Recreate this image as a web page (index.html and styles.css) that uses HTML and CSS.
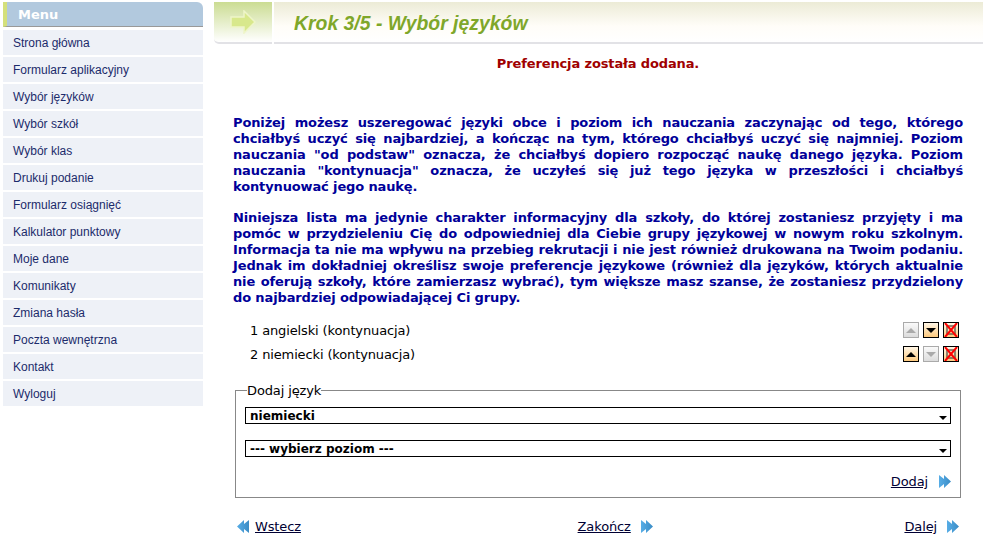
FILE: index.html
```html
<!DOCTYPE html>
<html lang="pl">
<head>
    <meta charset="UTF-8">
    <meta name="viewport" content="width=device-width, initial-scale=1.0">
    <title>Krok 3/5 - Wybór języków</title>
    <link rel="stylesheet" href="styles.css">
</head>
<body>
    <svg class="defs" width="0" height="0">
        <defs>
            <linearGradient id="arrowFill" x1="0" y1="0" x2="1" y2="0">
                <stop offset="0" stop-color="#57ade6"/>
                <stop offset="1" stop-color="#3a8cc6"/>
            </linearGradient>
        </defs>
    </svg>

    <div class="sidebar">
        <div class="menu-title">Menu</div>
        <ul class="menu">
            <li><a href="#">Strona główna</a></li>
            <li><a href="#">Formularz aplikacyjny</a></li>
            <li><a href="#">Wybór języków</a></li>
            <li><a href="#">Wybór szkół</a></li>
            <li><a href="#">Wybór klas</a></li>
            <li><a href="#">Drukuj podanie</a></li>
            <li><a href="#">Formularz osiągnięć</a></li>
            <li><a href="#">Kalkulator punktowy</a></li>
            <li><a href="#">Moje dane</a></li>
            <li><a href="#">Komunikaty</a></li>
            <li><a href="#">Zmiana hasła</a></li>
            <li><a href="#">Poczta wewnętrzna</a></li>
            <li><a href="#">Kontakt</a></li>
            <li><a href="#">Wyloguj</a></li>
        </ul>
    </div>

    <div class="main">
        <div class="page-header">
            <div class="header-icon">
                <svg width="26" height="24" viewBox="0 0 26 24">
                    <path d="M1 7H14V1L25 12L14 23V17H1Z" fill="#d8e88c" stroke="#eef5c8" stroke-width="1.5"/>
                </svg>
            </div>
            <h1 class="header-title">Krok 3/5 - Wybór języków</h1>
        </div>

        <div class="content">
            <p class="notice">Preferencja została dodana.</p>

            <p class="info">
                <span class="line">Poniżej możesz uszeregować języki obce i poziom ich nauczania zaczynając od tego, którego</span>
                <span class="line">chciałbyś uczyć się najbardziej, a kończąc na tym, którego chciałbyś uczyć się najmniej. Poziom</span>
                <span class="line">nauczania "od podstaw" oznacza, że chciałbyś dopiero rozpocząć naukę danego języka. Poziom</span>
                <span class="line">nauczania "kontynuacja" oznacza, że uczyłeś się już tego języka w przeszłości i chciałbyś</span>
                kontynuować jego naukę.
            </p>

            <p class="info">
                <span class="line">Niniejsza lista ma jedynie charakter informacyjny dla szkoły, do której zostaniesz przyjęty i ma</span>
                <span class="line">pomóc w przydzieleniu Cię do odpowiedniej dla Ciebie grupy językowej w nowym roku szkolnym.</span>
                <span class="line">Informacja ta nie ma wpływu na przebieg rekrutacji i nie jest również drukowana na Twoim podaniu.</span>
                <span class="line">Jednak im dokładniej określisz swoje preferencje językowe (również dla języków, których aktualnie</span>
                <span class="line">nie oferują szkoły, które zamierzasz wybrać), tym większe masz szanse, że zostaniesz przydzielony</span>
                do najbardziej odpowiadającej Ci grupy.
            </p>

            <div class="pref-list">
                <div class="pref-row">
                    <span class="pref-name">1 angielski (kontynuacja)</span>
                    <span class="pref-buttons">
                        <span class="btn btn-off"><span class="tri-up"></span></span>
                        <span class="btn"><span class="tri-down"></span></span>
                        <span class="btn">
                            <svg width="14" height="14" viewBox="0 0 14 14"><path d="M3 3H11V11H3Z" fill="none" stroke="#222" stroke-width="1"/><path d="M1 0L13 14M13 0L1 14" stroke="#f00" stroke-width="2"/></svg>
                        </span>
                    </span>
                </div>
                <div class="pref-row">
                    <span class="pref-name">2 niemiecki (kontynuacja)</span>
                    <span class="pref-buttons">
                        <span class="btn"><span class="tri-up"></span></span>
                        <span class="btn btn-off"><span class="tri-down"></span></span>
                        <span class="btn">
                            <svg width="14" height="14" viewBox="0 0 14 14"><path d="M3 3H11V11H3Z" fill="none" stroke="#222" stroke-width="1"/><path d="M1 0L13 14M13 0L1 14" stroke="#f00" stroke-width="2"/></svg>
                        </span>
                    </span>
                </div>
            </div>

            <fieldset class="add-box">
                <legend>Dodaj język</legend>
                <div class="select-wrap">
                    <select>
                        <option>niemiecki</option>
                    </select>
                </div>
                <div class="select-wrap">
                    <select>
                        <option>--- wybierz poziom ---</option>
                    </select>
                </div>
                <div class="add-action">
                    <a href="#">Dodaj</a>
                    <svg class="arrow" width="12" height="13" viewBox="0 0 12 13"><path d="M0 0L5 4V0L12 6.5L5 13V9L0 13Z" fill="url(#arrowFill)"/></svg>
                </div>
            </fieldset>

            <div class="nav-links">
                <span class="nav-item">
                    <svg class="arrow" width="12" height="13" viewBox="0 0 12 13"><path d="M12 0L7 4V0L0 6.5L7 13V9L12 13Z" fill="url(#arrowFill)"/></svg>
                    <a href="#">Wstecz</a>
                </span>
                <span class="nav-item nav-middle">
                    <a href="#">Zakończ</a>
                    <svg class="arrow" width="12" height="13" viewBox="0 0 12 13"><path d="M0 0L5 4V0L12 6.5L5 13V9L0 13Z" fill="url(#arrowFill)"/></svg>
                </span>
                <span class="nav-item">
                    <a href="#">Dalej</a>
                    <svg class="arrow" width="12" height="13" viewBox="0 0 12 13"><path d="M0 0L5 4V0L12 6.5L5 13V9L0 13Z" fill="url(#arrowFill)"/></svg>
                </span>
            </div>
        </div>
    </div>
</body>
</html>
```

FILE: styles.css
```css
html, body {
    overflow: hidden;
}

body {
    display: flex;
    margin: 0;
    padding: 2px 3px 0 3px;
    background-color: #fff;
    font-family: "DejaVu Sans", Verdana, sans-serif;
    font-size: 13px;
    letter-spacing: -0.13px;
    color: #000;
}

.defs {
    position: absolute;
}

.sidebar {
    width: 200px;
    flex-shrink: 0;
}

.menu-title {
    height: 24px;
    line-height: 26px;
    padding-left: 11px;
    background-color: #b2c9de;
    border-left: 4px solid #d4e07c;
    border-bottom: 1px solid #999;
    border-top-right-radius: 6px;
    color: #fff;
    font-weight: bold;
    font-size: 13px;
    letter-spacing: 0;
}

.menu {
    list-style: none;
    margin: 3px 0 0 0;
    padding: 0;
}

.menu li {
    height: 25px;
    margin-bottom: 2px;
    background-color: #eef1f7;
}

.menu a {
    display: block;
    padding-left: 10px;
    line-height: 27px;
    font-family: "Liberation Sans", Arial, sans-serif;
    font-size: 12px;
    letter-spacing: 0;
    color: #1c2b6b;
    text-decoration: none;
}

.main {
    flex: 1;
    margin-left: 11px;
    min-width: 0;
}

.page-header {
    display: flex;
    height: 42px;
    gap: 2px;
}

.header-icon {
    display: flex;
    align-items: center;
    justify-content: center;
    width: 58px;
    flex-shrink: 0;
    box-sizing: border-box;
    border-bottom: 2px solid #e2e2e6;
    border-bottom-left-radius: 5px;
    background: linear-gradient(#cbdc92, #fff);
}

.header-title {
    flex: 1;
    margin: 0;
    padding-left: 20px;
    box-sizing: border-box;
    border-bottom: 2px solid #e2e2e6;
    background: linear-gradient(#ecebd6, #fffdf8 60%, #fff);
    font-family: "Liberation Sans", Arial, sans-serif;
    font-style: italic;
    font-weight: bold;
    font-size: 19.4px;
    letter-spacing: 0;
    line-height: 42px;
    color: #7fa72a;
}

.content {
    padding: 0 20px 0 19px;
}

.notice {
    margin: 12px 0 0 0;
    line-height: 16px;
    text-align: center;
    font-weight: bold;
    color: #a00000;
}

.info {
    margin: 15px 0 0 0;
    line-height: 16px;
    text-align: justify;
    font-weight: bold;
    color: #000099;
}

.notice + .info {
    margin-top: 43px;
}

.line {
    display: block;
    text-align-last: justify;
}

.pref-list {
    margin-top: 12px;
    padding: 0 4px 0 17px;
}

.pref-row {
    display: flex;
    justify-content: space-between;
    align-items: center;
    height: 24px;
}

.pref-buttons {
    display: flex;
    gap: 4px;
}

.btn {
    display: flex;
    align-items: center;
    justify-content: center;
    width: 16px;
    height: 16px;
    box-sizing: border-box;
    border: 1px solid #000;
    background: linear-gradient(#fff6e6, #fcc97e);
}

.btn-off {
    border-color: #aaa;
    background: linear-gradient(#fafafa, #dcdcdc);
}

.tri-up,
.tri-down {
    width: 0;
    height: 0;
    border-left: 5px solid transparent;
    border-right: 5px solid transparent;
}

.tri-up {
    border-bottom: 5px solid #000;
}

.tri-down {
    border-top: 5px solid #000;
}

.btn-off .tri-up {
    border-bottom-color: #aaa;
}

.btn-off .tri-down {
    border-top-color: #aaa;
}

.add-box {
    margin: 17px 2px 0 2px;
    padding: 9px 9px 8px 9px;
    border: 1px solid #888;
}

.add-box legend {
    margin-left: 2px;
    padding: 0;
}

.select-wrap {
    position: relative;
    margin-bottom: 16px;
}

.select-wrap::after {
    content: "";
    position: absolute;
    right: 4px;
    top: 9px;
    border-left: 4px solid transparent;
    border-right: 4px solid transparent;
    border-top: 4px solid #000;
}

.select-wrap select {
    display: block;
    width: 100%;
    height: 17px;
    padding: 0 4px;
    border: 1px solid #000;
    border-radius: 0;
    background: #fff;
    appearance: none;
    font-family: "DejaVu Sans", Verdana, sans-serif;
    font-size: 12px;
    font-weight: bold;
    color: #000;
}

.add-action {
    display: flex;
    justify-content: flex-end;
    gap: 11px;
    align-items: center;
    margin-top: 17px;
}

a {
    color: #000033;
}

.nav-links {
    display: flex;
    justify-content: space-between;
    margin-top: 21px;
    padding: 0 4px;
}

.nav-item {
    display: flex;
    align-items: center;
    gap: 6px;
}

.nav-item a + .arrow {
    margin-left: 4px;
}

.nav-middle {
    margin-left: 25px;
}
```
